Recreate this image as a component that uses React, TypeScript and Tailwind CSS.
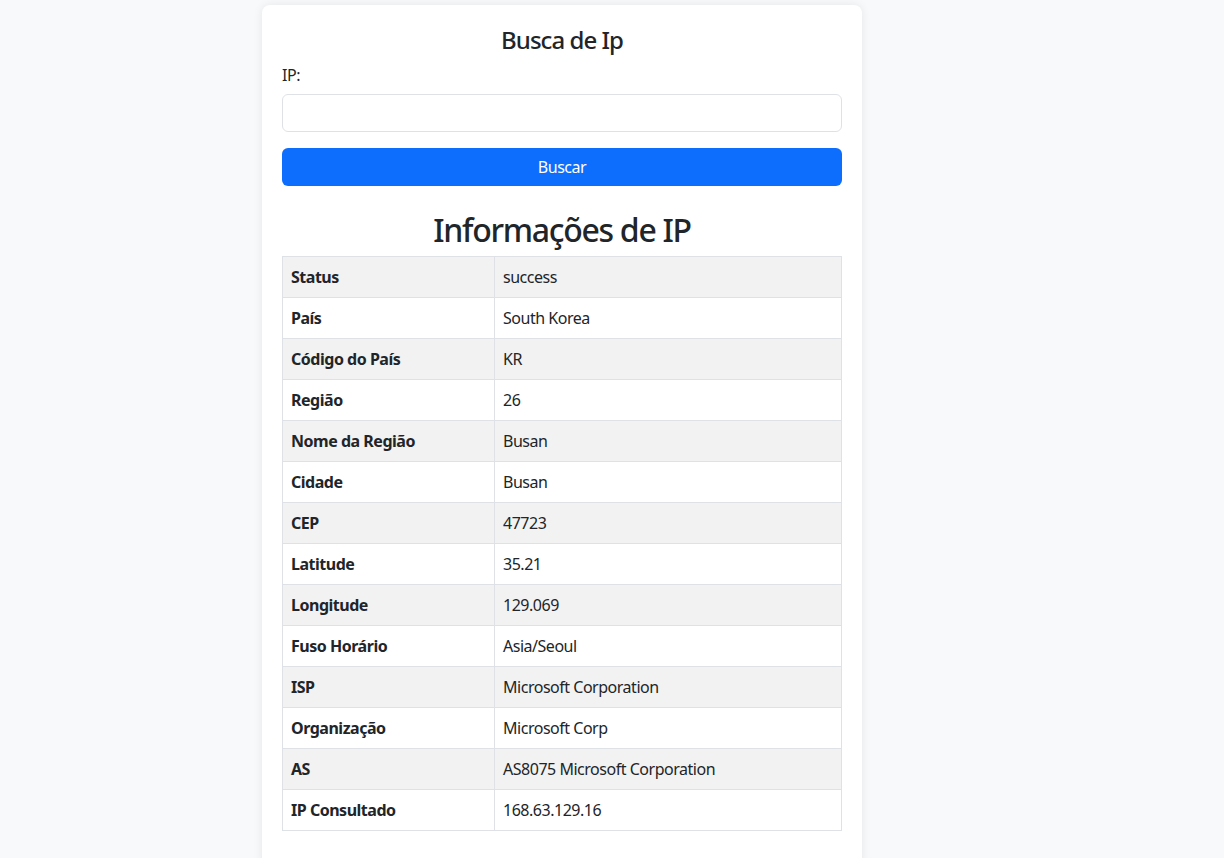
const rows: [string, string][] = [
  ["Status", "success"],
  ["País", "South Korea"],
  ["Código do País", "KR"],
  ["Região", "26"],
  ["Nome da Região", "Busan"],
  ["Cidade", "Busan"],
  ["CEP", "47723"],
  ["Latitude", "35.21"],
  ["Longitude", "129.069"],
  ["Fuso Horário", "Asia/Seoul"],
  ["ISP", "Microsoft Corporation"],
  ["Organização", "Microsoft Corp"],
  ["AS", "AS8075 Microsoft Corporation"],
  ["IP Consultado", "168.63.129.16"],
];

export default function App() {
  return (
    <div className="min-h-[858px] bg-[#f8f9fa] pt-[5px] text-[#212529] font-['Noto_Sans',sans-serif] tracking-[-0.03em]">
      <div className="ml-[262px] w-[600px] rounded-lg bg-white p-5 shadow-[0_0_10px_rgba(0,0,0,0.08)]">
        <h2 className="pt-px text-center text-2xl leading-[1.2] font-medium tracking-[-0.04em]">Busca de Ip</h2>
        <label className="mt-2 block text-base leading-6">IP:</label>
        <input
          type="text"
          className="mt-[7px] block h-[38px] w-full rounded-md border border-[#dee2e6] px-3 outline-none"
        />
        <button className="mt-4 block h-[38px] w-full rounded-md bg-[#0d6efd] text-base text-white">
          Buscar
        </button>
        <h1 className="mt-[25px] mb-[7px] text-center text-[32px] leading-[1.2] font-medium tracking-[-0.04em]">
          Informações de IP
        </h1>
        <table className="w-full border-collapse border border-[#dee2e6] text-base leading-6">
          <tbody>
            {rows.map(([k, v], i) => (
              <tr key={k} className={i % 2 === 0 ? "bg-[#f2f2f2]" : "bg-white"}>
                <th className="w-[212px] border border-[#dee2e6] px-2 py-2 text-left font-bold">{k}</th>
                <td className="border border-[#dee2e6] px-2 py-2">{v}</td>
              </tr>
            ))}
          </tbody>
        </table>
        <div className="h-5" />
      </div>
    </div>
  );
}
